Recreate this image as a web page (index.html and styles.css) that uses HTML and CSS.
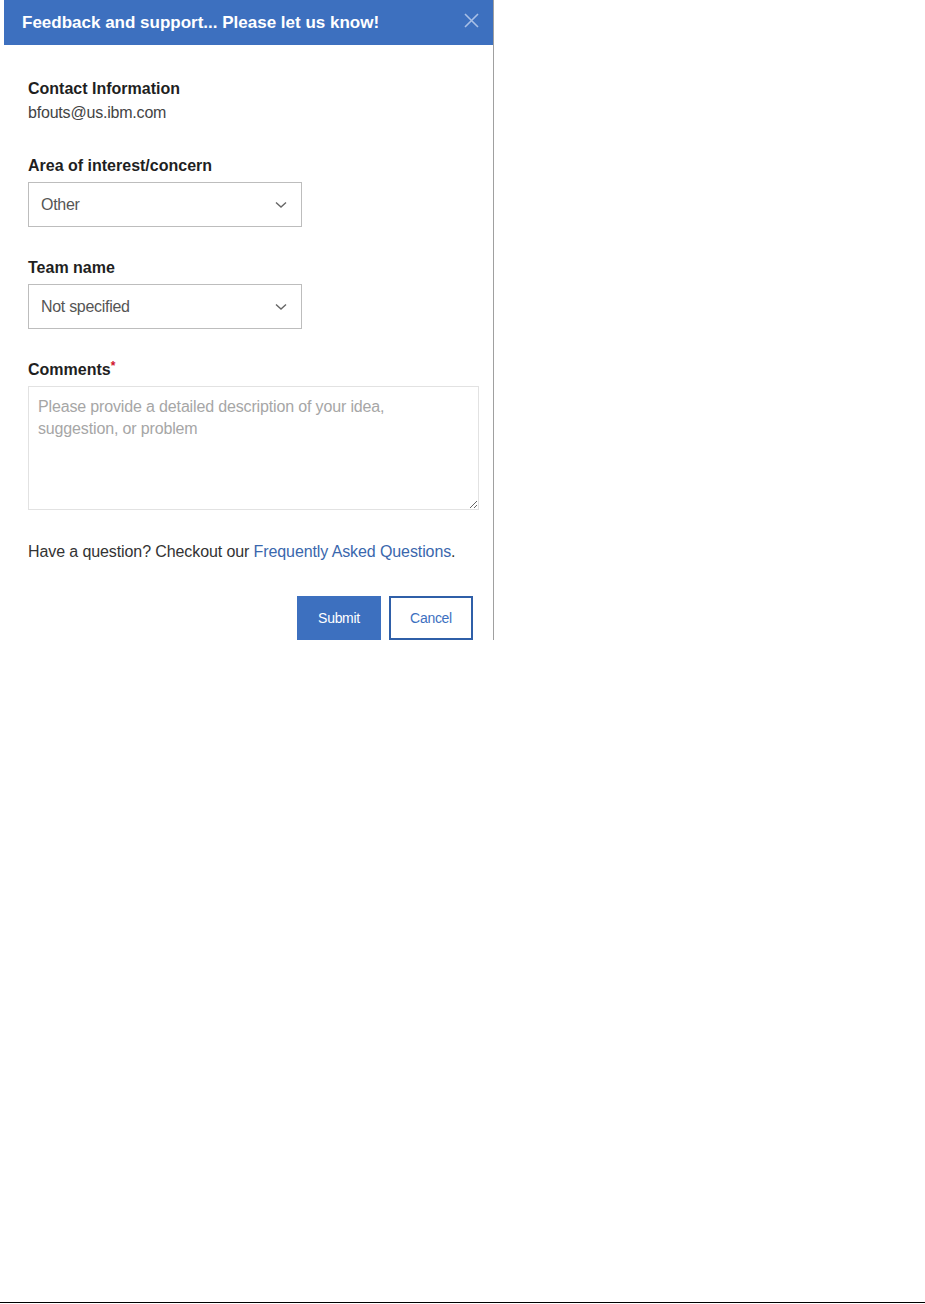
FILE: index.html
```html
<!DOCTYPE html>
<html lang="en">

<head>
    <meta charset="UTF-8">
    <meta name="viewport" content="width=device-width, initial-scale=1.0">
    <title>Feedback and support</title>
    <link rel="stylesheet" href="styles.css">
</head>

<body>
    <div class="modal">
        <!-- Blue title bar with the close button -->
        <div class="modal-header">
            <h1>Feedback and support... Please let us know!</h1>
            <button class="close-button" aria-label="Close">
                <svg width="15" height="15" viewBox="0 0 15 15">
                    <path d="M1 1 L14 14 M14 1 L1 14" stroke="#a9c0e6" stroke-width="1.6" fill="none" />
                </svg>
            </button>
        </div>

        <div class="modal-body">
            <div class="field">
                <div class="field-label">Contact Information</div>
                <div class="contact-value">bfouts@us.ibm.com</div>
            </div>

            <div class="field">
                <label class="field-label" for="area">Area of interest/concern</label>
                <div class="select-wrap">
                    <select id="area">
                        <option>Other</option>
                    </select>
                    <svg class="chevron" width="12" height="8" viewBox="0 0 12 8">
                        <path d="M1 1.5 L6 6 L11 1.5" stroke="#666" stroke-width="1.4" fill="none" />
                    </svg>
                </div>
            </div>

            <div class="field">
                <label class="field-label" for="team">Team name</label>
                <div class="select-wrap">
                    <select id="team">
                        <option>Not specified</option>
                    </select>
                    <svg class="chevron" width="12" height="8" viewBox="0 0 12 8">
                        <path d="M1 1.5 L6 6 L11 1.5" stroke="#666" stroke-width="1.4" fill="none" />
                    </svg>
                </div>
            </div>

            <div class="field">
                <label class="field-label" for="comments">Comments<span class="required">*</span></label>
                <textarea id="comments" placeholder="Please provide a detailed description of your idea, suggestion, or problem"></textarea>
            </div>

            <p class="faq">Have a question? Checkout our <a href="#">Frequently Asked Questions</a>.</p>

            <div class="button-group">
                <button class="submit-button">Submit</button>
                <button class="cancel-button">Cancel</button>
            </div>
        </div>
    </div>

    <div class="page-rule"></div>
</body>

</html>
```

FILE: styles.css
```css
* {
    box-sizing: border-box;
}

body {
    margin: 0;
    min-height: 1304px;
    display: flex;
    flex-direction: column;
    background: #fff;
    font-family: "Liberation Sans", Arial, sans-serif;
    color: #222;
}

.modal {
    margin-left: 4px;
    width: 490px;
    height: 640px;
    border-right: 1px solid #a0a0a0;
    overflow: hidden;
}

.modal-header {
    height: 45px;
    background: #3d70bf;
    display: flex;
    align-items: center;
    justify-content: space-between;
    padding: 0 14px 0 18px;
}

.modal-header h1 {
    margin: 0;
    color: #fff;
    font-size: 17px;
    font-weight: 700;
    letter-spacing: 0;
}

.close-button {
    background: none;
    border: none;
    padding: 0;
    margin-top: -4px;
    display: flex;
}

.modal-body {
    padding: 32px 20px 0 24px;
}

.field {
    margin-bottom: 29px;
}

.field-label {
    display: block;
    font-size: 16px;
    font-weight: 700;
    line-height: 24px;
    letter-spacing: 0;
    color: #1f1f1f;
    margin-bottom: 4px;
}

.contact-value {
    font-size: 16px;
    line-height: 24px;
    margin-top: -4px;
    letter-spacing: -0.2px;
    color: #444;
}

.required {
    color: #d0142c;
    font-size: 12px;
    vertical-align: top;
    line-height: 16px;
}

.select-wrap {
    position: relative;
    width: 274px;
}

.select-wrap select {
    appearance: none;
    width: 100%;
    height: 45px;
    border: 1px solid #bdbdbd;
    border-radius: 0;
    background: #fff;
    padding: 0 12px;
    font-family: inherit;
    font-size: 16px;
    letter-spacing: -0.3px;
    color: #555;
}

.chevron {
    position: absolute;
    right: 15px;
    top: 19px;
    pointer-events: none;
}

textarea {
    display: block;
    width: 451px;
    height: 124px;
    border: 1px solid #e2e2e2;
    padding: 9px 58px 10px 9px;
    font-family: inherit;
    font-size: 16px;
    line-height: 22px;
    letter-spacing: -0.15px;
    resize: vertical;
}

textarea::placeholder {
    color: #a6a6a6;
}

.faq {
    margin: 30px 0 0;
    font-size: 16px;
    line-height: 24px;
    letter-spacing: -0.1px;
    color: #333;
}

.faq a {
    color: #3a67ad;
    text-decoration: none;
}

.button-group {
    display: flex;
    justify-content: flex-end;
    gap: 8px;
    margin-top: 32px;
}

.button-group button {
    width: 84px;
    height: 44px;
    font-family: inherit;
    font-size: 14px;
    letter-spacing: -0.3px;
    cursor: pointer;
}

.submit-button {
    background: #3d70bf;
    border: none;
    color: #fff;
}

.cancel-button {
    background: #fff;
    border: 2px solid #2f5fa8;
    color: #3d70bf;
}

.page-rule {
    margin-top: auto;
    margin-bottom: 1px;
    border-top: 1px solid #000;
}
```
